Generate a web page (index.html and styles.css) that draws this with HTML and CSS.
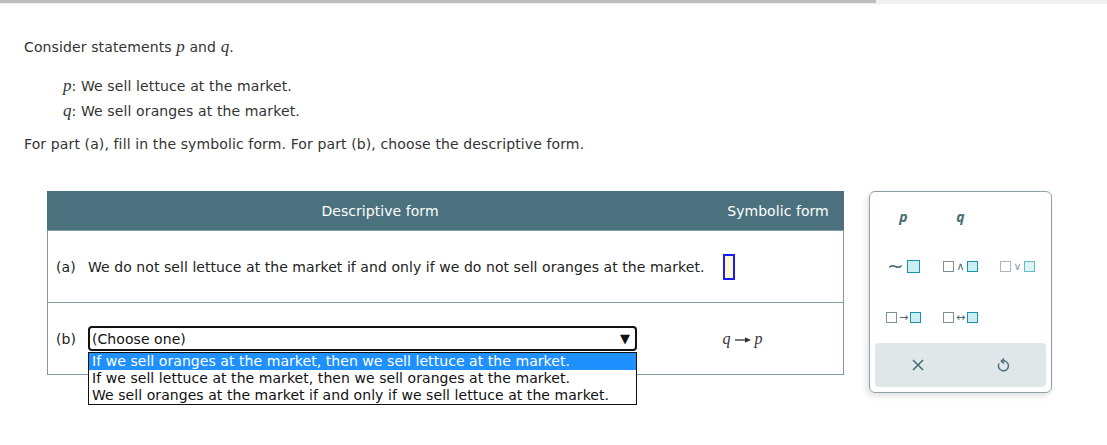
FILE: index.html
```html
<!DOCTYPE html>
<html>
<head>
<meta charset="utf-8">
<link rel="stylesheet" href="styles.css">
</head>
<body>
<div class="topbar"><div class="topbar-fill"></div></div>
<div class="content">
  <p class="intro">Consider statements <span class="m">p</span> and <span class="m">q</span>.</p>
  <div class="defs">
    <div class="def"><span class="m">p</span>: We sell lettuce at the market.</div>
    <div class="def"><span class="m">q</span>: We sell oranges at the market.</div>
  </div>
  <p class="instr">For part (a), fill in the symbolic form. For part (b), choose the descriptive form.</p>

  <div class="work">
    <table class="qtable">
      <thead>
        <tr>
          <th colspan="2" class="th-desc">Descriptive form</th>
          <th class="th-sym">Symbolic form</th>
        </tr>
      </thead>
      <tbody>
        <tr class="row">
          <td class="lbl">(a)</td>
          <td class="desc">We do not sell lettuce at the market if and only if we do not sell oranges at the market.</td>
          <td class="sym"><span class="answer-box"></span></td>
        </tr>
        <tr class="row">
          <td class="lbl">(b)</td>
          <td class="desc">
            <div class="select-wrap">
              <div class="select"><span>(Choose one)</span><span class="arrow">▼</span></div>
              <div class="options">
                <div class="opt sel">If we sell oranges at the market, then we sell lettuce at the market.</div>
                <div class="opt">If we sell lettuce at the market, then we sell oranges at the market.</div>
                <div class="opt">We sell oranges at the market if and only if we sell lettuce at the market.</div>
              </div>
            </div>
          </td>
          <td class="sym"><span class="m expr">q<svg class="arr" width="22" height="8" viewBox="0 0 22 8"><path d="M3 4 H15" stroke="#333" stroke-width="1.3"/><path d="M13 1.3 L19 4 L13 6.7 Z" fill="#333"/></svg>p</span></td>
        </tr>
      </tbody>
    </table>

    <div class="keypad">
      <div class="kgrid">
        <div class="key"><span class="var">p</span></div>
        <div class="key"><span class="var">q</span></div>
        <div class="key"></div>
        <div class="key"><span class="op tilde">~</span><span class="bx big"></span></div>
        <div class="key"><span class="bx gray"></span><span class="op sm">∧</span><span class="bx teal"></span></div>
        <div class="key faded"><span class="bx gray"></span><span class="op sm">∨</span><span class="bx teal"></span></div>
        <div class="key"><span class="bx gray"></span><span class="op sm">→</span><span class="bx teal"></span></div>
        <div class="key"><span class="bx gray"></span><span class="op sm">↔</span><span class="bx teal"></span></div>
        <div class="key"></div>
      </div>
      <div class="kbar">
        <div class="kbtn">
          <svg width="14" height="14" viewBox="0 0 14 14"><path d="M2 2 L12 12 M12 2 L2 12" stroke="#4a6a75" stroke-width="1.6" fill="none"/></svg>
        </div>
        <div class="kbtn">
          <svg width="14" height="16" viewBox="0 0 14 16"><path d="M5.5 4.2 A5 5 0 1 1 3 6.5" stroke="#4a6a75" stroke-width="1.4" fill="none"/><path d="M8 1.5 L5.3 4.2 L8 6.6" stroke="#4a6a75" stroke-width="1.4" fill="none"/></svg>
        </div>
      </div>
    </div>
  </div>
</div>
</body>
</html>
```

FILE: styles.css
```css
html, body {
  margin: 0;
  padding: 0;
  background: #fff;
}
body {
  font-family: "DejaVu Sans", Verdana, sans-serif;
  font-size: 14px;
  letter-spacing: 0.12px;
  color: #333;
  min-height: 445px;
}
.topbar {
  height: 4px;
  background: #f0f0f0;
}
.topbar-fill {
  width: 876px;
  height: 3px;
  background: #bdbdbd;
}
.content {
  padding: 0 0 40px 24px;
}
.m {
  font-family: "Liberation Serif", "Times New Roman", serif;
  font-style: italic;
  font-size: 17px;
  letter-spacing: 0;
}
.intro {
  margin: 0;
  padding-top: 33px;
  line-height: 20px;
}
.defs {
  padding-left: 39px;
  margin-top: 17px;
}
.def {
  height: 25px;
  line-height: 24px;
}
.instr {
  margin: 10px 0 0 0;
  line-height: 20px;
}
.work {
  display: flex;
  align-items: flex-start;
  margin-top: 37px;
  padding-left: 23px;
}
.qtable {
  border-collapse: collapse;
  width: 797px;
  border: 1px solid #7f9ba2;
  letter-spacing: 0.06px;
}
.qtable th {
  background: #4a717d;
  color: #fff;
  font-weight: normal;
  height: 38px;
  padding: 0;
  border: 1px solid #4a717d;
  border-bottom: 1px solid #7f9ba2;
}
.th-desc { text-align: center; }
.th-sym { width: 130px; text-align: center; }
.row td {
  height: 71px;
  padding: 0;
  border-bottom: 1px solid #7f9ba2;
  vertical-align: middle;
  color: #222;
}
.lbl {
  width: 32px;
  padding-left: 8px !important;
}
.desc { white-space: nowrap; }
.sym { padding-left: 10px !important; }
.answer-box {
  display: inline-block;
  width: 8px;
  height: 22px;
  border: 2px solid #1a1aff;
  background: #fff8d2;
  vertical-align: middle;
}
.expr { font-size: 16px; color: #333; }
.arr {
  vertical-align: middle;
  margin: 0 1px;
}
.select-wrap {
  position: relative;
  width: 549px;
}
.select {
  box-sizing: border-box;
  height: 25px;
  border: 2px solid #111;
  border-radius: 4px;
  display: flex;
  align-items: center;
  justify-content: space-between;
  padding: 0 5px 0 2px;
  color: #111;
  background: #fff;
}
.arrow { font-size: 13px; }
.options {
  position: absolute;
  left: 0;
  top: 26px;
  width: 549px;
  box-sizing: border-box;
  border: 1px solid #111;
  background: #fff;
  z-index: 5;
}
.opt {
  height: 17px;
  line-height: 17px;
  padding-left: 3px;
  color: #111;
}
.opt.sel {
  background: #1e90ff;
  color: #fff;
}
.keypad {
  margin-left: 25px;
  width: 183px;
  height: 202px;
  box-sizing: border-box;
  border: 1px solid #8aa1a7;
  border-radius: 6px;
  box-shadow: -2px 3px 6px rgba(0,0,0,0.12);
  padding: 0 5px 5px 5px;
  display: flex;
  flex-direction: column;
  letter-spacing: 0;
}
.kgrid {
  display: grid;
  grid-template-columns: repeat(3, 1fr);
  grid-template-rows: 48px 52px 50px;
}
.key {
  display: flex;
  align-items: center;
  justify-content: center;
  gap: 2px;
}
.key.faded { opacity: 0.65; }
.var {
  font-family: "Open Sans", "DejaVu Sans", sans-serif;
  font-weight: bold;
  font-style: italic;
  font-size: 14px;
  color: #4a6a75;
}
.op {
  color: #4a6a75;
  font-size: 14px;
  line-height: 1;
}
.op.tilde { font-size: 20px; margin-right: 1px; }
.op.sm { font-size: 11px; }
.bx {
  display: inline-block;
  box-sizing: border-box;
  width: 11px;
  height: 11px;
}
.bx.gray {
  border: 1.5px solid #7d9097;
  background: #fff;
}
.bx.teal, .bx.big {
  border: 1.5px solid #1795aa;
  background: #cdeef4;
}
.bx.big {
  width: 13px;
  height: 13px;
}
.kbar {
  margin-top: auto;
  height: 44px;
  background: #e0e7e9;
  border-radius: 4px;
  display: flex;
}
.kbtn {
  flex: 1;
  display: flex;
  align-items: center;
  justify-content: center;
}
```
